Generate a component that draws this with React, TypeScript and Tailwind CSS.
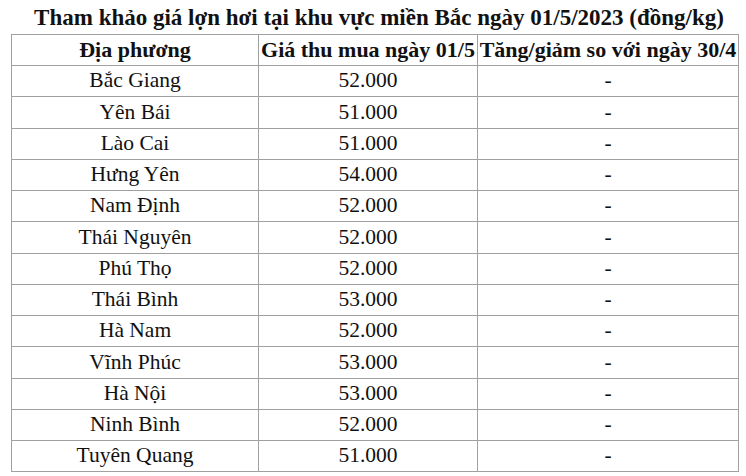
import React from "react";

const rows: [string, string][] = [
  ["Bắc Giang", "52.000"],
  ["Yên Bái", "51.000"],
  ["Lào Cai", "51.000"],
  ["Hưng Yên", "54.000"],
  ["Nam Định", "52.000"],
  ["Thái Nguyên", "52.000"],
  ["Phú Thọ", "52.000"],
  ["Thái Bình", "53.000"],
  ["Hà Nam", "52.000"],
  ["Vĩnh Phúc", "53.000"],
  ["Hà Nội", "53.000"],
  ["Ninh Bình", "52.000"],
  ["Tuyên Quang", "51.000"],
];

export default function App() {
  return (
    <div
      className="w-[746px] h-[476px] bg-white text-[#111] overflow-hidden"
      style={{ fontFamily: '"Liberation Serif", "Times New Roman", serif' }}
    >
      <div className="h-[34px] flex items-center justify-center pl-[12px] text-[23px] font-bold leading-none pt-[1px] whitespace-nowrap">
        Tham khảo giá lợn hơi tại khu vực miền Bắc ngày 01/5/2023 (đồng/kg)
      </div>
      <table className="ml-[11px] border-collapse text-[21.5px] leading-none">
        <colgroup>
          <col className="w-[247px]" />
          <col className="w-[219px]" />
          <col className="w-[261px]" />
        </colgroup>
        <thead>
          <tr className="h-[31px] text-[22px]">
            <th className="border border-[#a0a0a0] font-bold text-center p-0 whitespace-nowrap">Địa phương</th>
            <th className="border border-[#a0a0a0] font-bold text-center p-0 whitespace-nowrap">Giá thu mua ngày 01/5</th>
            <th className="border border-[#a0a0a0] font-bold text-center p-0 whitespace-nowrap">Tăng/giảm so với ngày 30/4</th>
          </tr>
        </thead>
        <tbody>
          {rows.map(([name, price]) => (
            <tr key={name} className="h-[31.25px]">
              <td className="border border-[#a0a0a0] text-center p-0">{name}</td>
              <td className="border border-[#a0a0a0] text-center p-0">{price}</td>
              <td className="border border-[#a0a0a0] text-center p-0">-</td>
            </tr>
          ))}
        </tbody>
      </table>
    </div>
  );
}
